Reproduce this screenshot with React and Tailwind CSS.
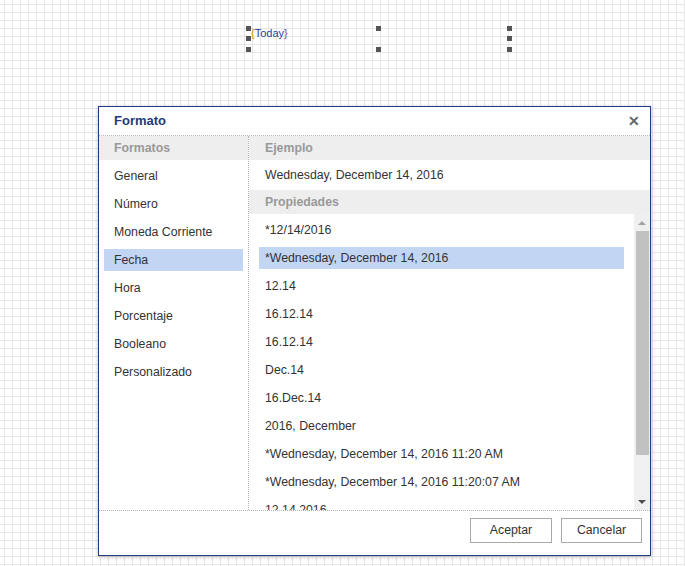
import React from "react";

const formatos = ["General", "Número", "Moneda Corriente", "Fecha", "Hora", "Porcentaje", "Booleano", "Personalizado"];
const propiedades = [
  "*12/14/2016",
  "*Wednesday, December 14, 2016",
  "12.14",
  "16.12.14",
  "16.12.14",
  "Dec.14",
  "16.Dec.14",
  "2016, December",
  "*Wednesday, December 14, 2016 11:20 AM",
  "*Wednesday, December 14, 2016 11:20:07 AM",
  "12.14.2016",
];

function Handle({ className }) {
  return <div className={"absolute w-[5px] h-[5px] bg-[#555] " + className} />;
}

export default function App() {
  return (
    <div
      className="relative w-[685px] h-[566px] overflow-hidden bg-white bg-[linear-gradient(to_right,#e6e6e6_1px,transparent_1px),linear-gradient(to_bottom,#e6e6e6_1px,transparent_1px)] bg-[size:8px_8px] bg-[position:4px_4px] text-[12.3px] text-[#333]"
      style={{ fontFamily: '"Liberation Sans", Arial, sans-serif' }}
    >
      {/* selected report element */}
      <div className="absolute left-[248px] top-[28px] w-[261px] h-[21px]">
        <div className="absolute left-[3px] top-[-1px] text-[11px] leading-[12px]">
          <span className="text-[#e08a00]">{"{"}</span>
          <span className="text-[#2244aa]">Today</span>
          <span className="text-[#7a3fa0]">{"}"}</span>
        </div>
        <Handle className="left-[-2px] top-[-2px]" />
        <Handle className="left-[-2px] top-[8px]" />
        <Handle className="left-[-2px] top-[19px]" />
        <Handle className="left-[128px] top-[-2px]" />
        <Handle className="left-[128px] top-[19px]" />
        <Handle className="left-[259px] top-[-2px]" />
        <Handle className="left-[259px] top-[8px]" />
        <Handle className="left-[259px] top-[19px]" />
      </div>

      {/* dialog */}
      <div className="absolute left-[98px] top-[106px] w-[553px] h-[450px] bg-white border border-[#1b3d7e] shadow-[0_1px_4px_rgba(0,0,0,0.25)] flex flex-col">
        <div className="h-[29px] flex items-center justify-between pl-[15px] pr-[10px] border-b border-dotted border-[#b5b5b5] shrink-0">
          <span className="font-bold text-[13px] text-[#1f3b73]">Formato</span>
          <span className="text-[#666] text-[14px] font-bold leading-none">✕</span>
        </div>

        <div className="flex flex-1 min-h-0">
          <div className="w-[150px] border-r border-dotted border-[#b5b5b5] shrink-0">
            <div className="h-[24px] bg-[#eeeeee] flex items-center pl-[15px] font-bold text-[#999]">Formatos</div>
            <div className="pt-[2px]">
              {formatos.map((f) => (
                <div key={f} className="h-[28px] px-[5px] py-[3px]">
                  <div className={"h-[22px] flex items-center pl-[10px] " + (f === "Fecha" ? "bg-[#c2d5f2]" : "")}>{f}</div>
                </div>
              ))}
            </div>
          </div>

          <div className="flex-1 flex flex-col min-w-0">
            <div className="h-[24px] bg-[#eeeeee] flex items-center pl-[16px] font-bold text-[#999] shrink-0">Ejemplo</div>
            <div className="h-[30px] flex items-center pl-[16px] shrink-0">Wednesday, December 14, 2016</div>
            <div className="h-[24px] bg-[#eeeeee] flex items-center pl-[16px] font-bold text-[#999] shrink-0">Propiedades</div>
            <div className="flex flex-1 min-h-0">
              <div className="flex-1 overflow-hidden pt-[2px] pl-[10px] pr-[10px]">
                {propiedades.map((p, i) => (
                  <div key={i} className="h-[28px] py-[3px]">
                    <div className={"h-[22px] flex items-center pl-[6px] whitespace-nowrap " + (i === 1 ? "bg-[#c2d5f2]" : "")}>{p}</div>
                  </div>
                ))}
              </div>
              <div className="w-[16px] bg-[#f0f0f0] flex flex-col items-center shrink-0">
                <div className="h-[17px] flex items-center justify-center">
                  <div className="w-0 h-0 border-l-[4px] border-r-[4px] border-b-[4px] border-l-transparent border-r-transparent border-b-[#a3a3a3]" />
                </div>
                <div className="w-[13px] h-[224px] bg-[#c1c1c1]" />
                <div className="flex-1" />
                <div className="h-[17px] flex items-center justify-center">
                  <div className="w-0 h-0 border-l-[4px] border-r-[4px] border-t-[4px] border-l-transparent border-r-transparent border-t-[#505050]" />
                </div>
              </div>
            </div>
          </div>
        </div>

        <div className="h-[45px] border-t border-dotted border-[#b5b5b5] flex items-start pt-[7px] justify-end gap-[9px] pr-[8px] shrink-0">
          <button className="w-[82px] h-[25px] border border-[#aaa] bg-white text-[12.3px] text-[#333]">Aceptar</button>
          <button className="w-[81px] h-[25px] border border-[#aaa] bg-white text-[12.3px] text-[#333]">Cancelar</button>
        </div>
      </div>
    </div>
  );
}
